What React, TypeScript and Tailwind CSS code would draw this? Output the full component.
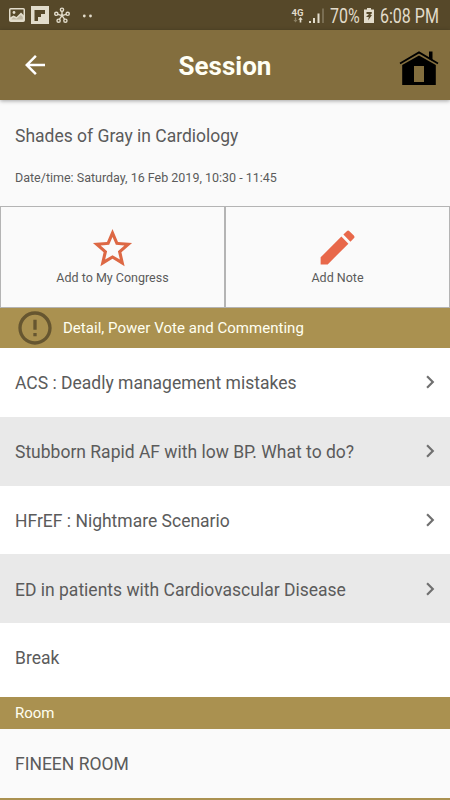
import { MdArrowBack, MdChevronRight, MdEdit, MdErrorOutline, MdStarBorder } from 'react-icons/md';

const talks = [
  { title: 'ACS : Deadly management mistakes', link: true },
  { title: 'Stubborn Rapid AF with low BP. What to do?', link: true },
  { title: 'HFrEF : Nightmare Scenario', link: true },
  { title: 'ED in patients with Cardiovascular Disease', link: true },
  { title: 'Break', link: false },
];

function StatusBar() {
  return (
    <div className="flex h-[30px] items-center bg-[#564829] pr-[11px] pl-[9px] text-[#e2dccb]">
      <svg width="16" height="14" viewBox="0 0 16 14">
        <rect x="0.75" y="0.75" width="14.5" height="12.5" rx="1" fill="none" stroke="currentColor" strokeWidth="1.5" />
        <circle cx="5" cy="4.5" r="1.4" fill="currentColor" />
        <path d="M1 9.5l3.5-2 3 1.5L12 4.5l3 3V13H1z" fill="currentColor" />
        <path d="M2.5 11l2-1.8 3 1.6L11.8 7l2 2v2.5H2.5z" fill="#564829" fillOpacity="0.25" />
      </svg>
      <svg className="ml-[6px]" width="18" height="18" viewBox="0 0 18 18">
        <rect width="18" height="18" fill="currentColor" />
        <path d="M3.5 4h10.5v4h-4v3H7v4H3.5z" fill="#564829" />
      </svg>
      <svg className="ml-[5px]" width="16" height="17" viewBox="0 0 16 17" fill="none" stroke="currentColor" strokeWidth="1.4">
        <path d="M8 8.7V4M8 8.7L4 7.3M8 8.7l4-1.4M8 8.7l-2.5 3.5M8 8.7l2.5 3.5" />
        <circle cx="8" cy="2.7" r="1.6" />
        <circle cx="2.3" cy="6.8" r="1.6" />
        <circle cx="13.7" cy="6.8" r="1.6" />
        <circle cx="4.6" cy="13.7" r="1.6" />
        <circle cx="11.4" cy="13.7" r="1.6" />
      </svg>
      <svg className="mt-px ml-[12px]" width="10" height="4" viewBox="0 0 10 4" fill="currentColor">
        <circle cx="2.3" cy="2" r="1.4" />
        <circle cx="8.5" cy="2" r="1.4" />
      </svg>
      <div className="ml-auto flex items-center pt-px">
        <div className="flex w-[13px] flex-col items-center">
          <span className="text-[9.5px] leading-[9px] font-bold">4G</span>
          <svg width="10" height="6" viewBox="0 0 10 6">
            <path d="M2.5 5.5L0.5 3h1.3V0.5h1.4V3h1.3z" fill="#8b8064" />
            <path d="M7.5 0L5.3 2.8h1.4v2.7h1.6V2.8h1.4z" fill="currentColor" />
          </svg>
        </div>
        <svg className="ml-[5px]" width="16" height="15" viewBox="0 0 16 15">
          <path d="M0 13h2v2H0zM4 10h2v5H4zM8.5 5.5h2V15h-2z" fill="currentColor" />
          <path d="M13.2 0.5h1.6V15h-1.6z" fill="#83785d" />
        </svg>
        <span className="ml-[5px] w-[29px] origin-left scale-x-[0.82] pt-[2px] text-[19.5px] leading-[30px] whitespace-nowrap">70%</span>
        <svg className="ml-[5px]" width="10" height="15" viewBox="0 0 10 15">
          <path d="M3 0h4v1.5h3V15H0V1.5h3z" fill="currentColor" />
          <path d="M2.5 4h5.3v1.5L6 7h2L4 12.5 4.8 9H2l3-3H2.5z" fill="#564829" />
        </svg>
        <span className="ml-[6px] w-[59px] origin-left scale-x-[0.82] pt-[2px] text-[19.5px] leading-[30px] whitespace-nowrap">6:08 PM</span>
      </div>
    </div>
  );
}

function HomeIcon() {
  return (
    <svg className="mt-[7px]" width="40" height="35" viewBox="0 0 40 35">
      <path d="M30 0.5h3.5v9.5l-3.5-2z" />
      <path d="M1 12.5L20 1.4 39 12.5" fill="none" stroke="#000" strokeWidth="1.8" />
      <path d="M20 4.5L36.8 14v20H3.2V14zM15 15v16h10V15z" fillRule="evenodd" />
    </svg>
  );
}

export default function App() {
  return (
    <div className="flex h-[800px] w-[450px] flex-col overflow-hidden bg-[#fafafa] font-['Roboto',sans-serif] text-[#5b5b5b]">
      <StatusBar />
      <header className="relative grid h-[70px] shrink-0 grid-cols-[39px_1fr_41px] items-center bg-[#836e3e] pr-[10px] pl-[20px] shadow-[0_1px_4px_rgba(0,0,0,0.35)]">
        <MdArrowBack className="size-[30px] text-white" />
        <h1 className="pt-[2px] pr-[8px] text-center text-[26px] font-bold text-[#fffff4]">Session</h1>
        <HomeIcon />
      </header>

      <section className="h-[106px] shrink-0 px-[15px] pt-[24px]">
        <h2 className="text-[17.5px] leading-[25px]">Shades of Gray in Cardiology</h2>
        <p className="mt-[19px] text-[12.5px] leading-5">Date/time: Saturday, 16 Feb 2019, 10:30 - 11:45</p>
      </section>

      <div className="grid h-[102px] shrink-0 grid-cols-2 border border-[#b4b4b4] text-[12.5px]">
        <button className="flex flex-col items-center border-r border-[#b4b4b4] pt-[18px]">
          <MdStarBorder className="size-[47px] text-[#dd6844]" />
          <span className="-mt-[2px] leading-4">Add to My Congress</span>
        </button>
        <button className="flex flex-col items-center border-l border-[#b4b4b4] pt-[18px]">
          <MdEdit className="size-[45px] text-[#e8684a]" />
          <span className="leading-4">Add Note</span>
        </button>
      </div>

      <div className="flex h-10 shrink-0 items-center bg-[#aa9150] pl-[15px] text-[15px] text-[#fffff0]">
        <MdErrorOutline className="size-10 text-[#665630]" />
        <span className="ml-[8px] pt-px tracking-[0.03px]">Detail, Power Vote and Commenting</span>
      </div>

      <ul className="h-[349px] shrink-0 bg-white text-[17.5px]">
        {talks.map((talk, i) => (
          <li
            key={talk.title}
            className={`flex h-[68.75px] items-center justify-between pr-[7px] pl-[15px] ${i % 2 ? 'bg-[#e9e9e9]' : 'bg-white'}`}
          >
            <span className="pt-[2px]">{talk.title}</span>
            {talk.link && <MdChevronRight className="size-[26px] text-[#707070]" />}
          </li>
        ))}
      </ul>

      <div className="flex h-8 shrink-0 items-center bg-[#aa9150] pt-px pl-[15px] text-[15px] text-[#fffff0]">Room</div>
      <div className="flex h-[69px] shrink-0 items-center pt-[2px] pl-[15px] text-[17.5px]">FINEEN ROOM</div>
      <div className="h-8 shrink-0 bg-[#aa9150]" />
    </div>
  );
}
